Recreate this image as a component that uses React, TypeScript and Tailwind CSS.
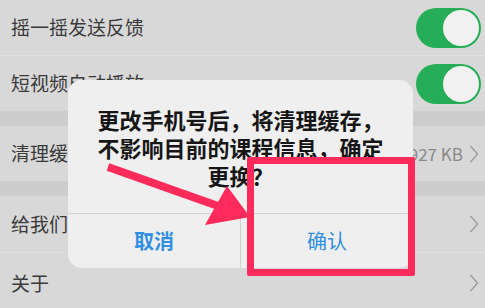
import React from "react"

const font = { fontFamily: '"Noto Sans CJK SC", "Noto Sans", sans-serif' }

function Toggle() {
  return (
    <div className="flex h-[40px] w-[65px] items-center justify-end rounded-full bg-[#25ad58] p-[2px]">
      <div className="h-[36px] w-[36px] rounded-full bg-[#f1f1f1]" />
    </div>
  )
}

function Chevron() {
  return (
    <svg width="10" height="20" viewBox="0 0 10 20" fill="none">
      <path d="M1.5 2 L8.5 10 L1.5 18" stroke="#9c9c9c" strokeWidth="1.4" />
    </svg>
  )
}

function Row({ label, right, h = "h-[55px]" }: { label: string; right: React.ReactNode; h?: string }) {
  return (
    <div className={`flex ${h} items-center justify-between bg-[#d8d8d8] pl-[11px]`}>
      <span className="text-[19px] text-[#3a3a3a]">{label}</span>
      {right}
    </div>
  )
}

export default function App() {
  return (
    <div className="relative h-[308px] w-[485px] overflow-hidden bg-[#cdcdcd]" style={font}>
      <Row label="摇一摇发送反馈" right={<div className="pr-[4px]"><Toggle /></div>} />
      <div className="h-px bg-[#dfdfdf]" />
      <Row label="短视频自动播放" right={<div className="pr-[4px]"><Toggle /></div>} />
      <div className="h-[15px]" />
      <Row
        label="清理缓存"
        right={
          <div className="flex items-center gap-[6px] pr-[6px]">
            <span className="text-[17px] text-[#8a8a8a]">927 KB</span>
            <Chevron />
          </div>
        }
      />
      <div className="h-[15px]" />
      <Row label="给我们评分" h="h-[56px]" right={<div className="pr-[6px]"><Chevron /></div>} />
      <div className="h-px bg-[#dfdfdf]" />
      <Row label="关于" h="h-[60px]" right={<div className="pr-[6px]"><Chevron /></div>} />

      {/* dialog */}
      <div className="absolute left-[68px] top-[80px] flex w-[345px] flex-col rounded-[14px] bg-[#efefef]">
        <div className="flex h-[133px] flex-col items-center justify-center text-center text-[22px] font-bold leading-[28px] text-[#161616]">
          <span>更改手机号后，将清理缓存，</span>
          <span>不影响目前的课程信息，确定</span>
          <span>更换？</span>
        </div>
        <div className="flex h-[55px] border-t border-[#d2d2d2]">
          <div className="flex flex-1 items-center justify-center border-r border-[#d2d2d2] text-[20px] font-bold text-[#2f8fe0]">
            取消
          </div>
          <div className="flex flex-1 items-center justify-center text-[20px] text-[#2f8fe0]">确认</div>
        </div>
      </div>

      {/* red highlight box */}
      <div className="absolute left-[247px] top-[157px] h-[119px] w-[168px] rounded-[2px] border-[7px] border-[#fd2b5b]" />

      {/* arrow */}
      <svg className="absolute left-0 top-0" width="485" height="308" viewBox="0 0 485 308">
        <line x1="108" y1="167" x2="218" y2="206" stroke="#fd2b5b" strokeWidth="8" />
        <polygon points="227,186 205,225 250,217" fill="#fd2b5b" />
      </svg>
    </div>
  )
}
